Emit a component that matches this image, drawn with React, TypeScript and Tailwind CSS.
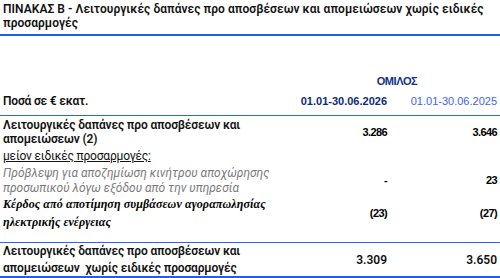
export default function App() {
  const sans = { fontFamily: "Roboto, 'Noto Sans', sans-serif" };
  return (
    <div className="w-[500px] h-[278px] bg-white overflow-hidden text-[#111]" style={sans}>
      <div className="h-[36px] px-[3px] pt-[2px] text-[12px] leading-[14px] font-semibold tracking-[0.05px] border-b-2 border-[#1f5fe6] whitespace-nowrap">
        ΠΙΝΑΚΑΣ Β - Λειτουργικές δαπάνες προ αποσβέσεων και απομειώσεων χωρίς ειδικές
        <br />
        προσαρμογές
      </div>

      <div className="h-[80px] border-b border-[#2a66dd] flex flex-col">
        <div className="h-[37px]" />
        <div className="grid grid-cols-[1fr_200px] h-[17px] items-center pr-[3px]">
          <div />
          <div
            className="text-center text-[11px] font-bold text-[#10308a] tracking-[-0.4px]"
            style={{ fontFamily: "'Liberation Sans', sans-serif" }}
          >
            ΟΜΙΛΟΣ
          </div>
        </div>
        <div className="grid grid-cols-[277px_110px_110px] h-[17px] items-center mt-[2px]">
          <div className="pl-[3px] text-[12px] font-semibold tracking-[-0.2px]">Ποσά σε € εκατ.</div>
          <div
            className="text-right text-[11px] font-bold text-[#0c2c7a]"
            style={{ fontFamily: "'Liberation Sans', sans-serif" }}
          >
            01.01-30.06.2026
          </div>
          <div
            className="text-right text-[11px] text-[#3d62f2]"
            style={{ fontFamily: "'Liberation Sans', sans-serif" }}
          >
            01.01-30.06.2025
          </div>
        </div>
      </div>

      <div className="grid grid-cols-[277px_110px_110px] h-[30px] items-center pt-[2px]">
        <div className="pl-[3px] text-[12px] leading-[14px] font-semibold tracking-[-0.15px] whitespace-nowrap">
          Λειτουργικές δαπάνες προ αποσβέσεων και
          <br />
          απομειώσεων (2)
        </div>
        <Num bold>3.286</Num>
        <Num bold>3.646</Num>
      </div>

      <div className="h-[17px] pl-[3px] text-[12px] leading-[17px] tracking-[-0.2px] underline mt-[2px]">
        μείον ειδικές προσαρμογές:
      </div>

      <div className="grid grid-cols-[277px_110px_110px] h-[31px] items-center">
        <div className="pl-[3px] text-[12px] leading-[15px] italic text-[#7a7a7a] whitespace-nowrap">
          Πρόβλεψη για αποζημίωση κινήτρου αποχώρησης
          <br />
          προσωπικού λόγω εξόδου από την υπηρεσία
        </div>
        <Num bold>-</Num>
        <Num bold>23</Num>
      </div>

      <div className="grid grid-cols-[277px_110px_110px] h-[34px] items-center">
        <div
          className="pl-[3px] text-[12px] leading-[18px] italic font-bold tracking-[0.1px] whitespace-nowrap text-black overflow-hidden"
          style={{ fontFamily: "'Liberation Serif', serif" }}
        >
          Κέρδος από αποτίμηση συμβάσεων αγοραπωλησίας
          <br />
          ηλεκτρικής ενέργειας
        </div>
        <Num bold>(23)</Num>
        <Num bold>(27)</Num>
      </div>

      <div className="h-[13px] border-b border-[#2a66dd]" />

      <div className="grid grid-cols-[277px_110px_110px] h-[35px] items-center border-b-2 border-[#1f5fe6]">
        <div className="pl-[3px] text-[12px] leading-[17px] font-semibold tracking-[-0.15px] whitespace-nowrap">
          Λειτουργικές δαπάνες προ αποσβέσεων και
          <br />
          απομειώσεων &nbsp;χωρίς ειδικές προσαρμογές
        </div>
        <div className="text-right text-[12px] font-semibold">3.309</div>
        <div className="text-right text-[12px] font-semibold">3.650</div>
      </div>
    </div>
  );
}

function Num({ children, bold }: { children: React.ReactNode; bold?: boolean }) {
  return (
    <div
      className={`text-right text-[11px] ${bold ? "font-bold tracking-[-0.6px] text-black" : "font-medium text-[#111]"}`}
      style={{ fontFamily: "'Liberation Sans', sans-serif" }}
    >
      {children}
    </div>
  );
}
